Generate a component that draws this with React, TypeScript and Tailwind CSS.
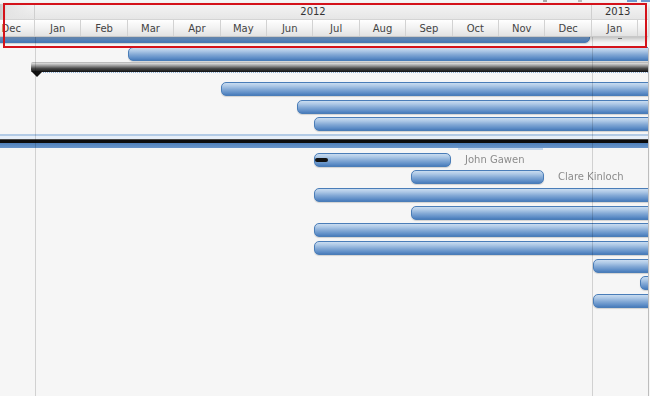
import type { CSSProperties } from "react";

type Row =
  | { kind: "bar"; left: number; right: number; label?: string; progress?: boolean }
  | { kind: "summary"; left: number }
  | { kind: "selected" };

const months = ["Dec", "Jan", "Feb", "Mar", "Apr", "May", "Jun", "Jul", "Aug", "Sep", "Oct", "Nov", "Dec", "Jan", "Feb"];

const rows: Row[] = [
  { kind: "bar", left: -10, right: 590 },
  { kind: "bar", left: 128, right: 700 },
  { kind: "summary", left: 31 },
  { kind: "bar", left: 221, right: 700 },
  { kind: "bar", left: 297, right: 700 },
  { kind: "bar", left: 314, right: 700 },
  { kind: "selected" },
  { kind: "bar", left: 314, right: 451, label: "John Gawen", progress: true },
  { kind: "bar", left: 411, right: 544, label: "Clare Kinloch" },
  { kind: "bar", left: 314, right: 700 },
  { kind: "bar", left: 411, right: 700 },
  { kind: "bar", left: 314, right: 700 },
  { kind: "bar", left: 314, right: 700 },
  { kind: "bar", left: 593, right: 700 },
  { kind: "bar", left: 640, right: 700 },
  { kind: "bar", left: 593, right: 700 },
];

function TaskBar({ row }: { row: Extract<Row, { kind: "bar" }> }) {
  const style: CSSProperties = { left: row.left, width: row.right - row.left };
  return (
    <>
      <div
        className="absolute top-[4px] h-[14px] rounded-[5px] border border-[#4a7db8] bg-[linear-gradient(to_bottom,#c9dcf0_0%,#adc8e6_25%,#82a8d5_55%,#5c8cc6_85%,#4a7cba_100%)] shadow-[0_1px_1px_rgba(0,0,0,0.15)]"
        style={style}
      >
        {row.progress && (
          <div className="absolute left-0 top-[4px] h-[4px] w-[13px] rounded-[2px] bg-[#111]" />
        )}
      </div>
      {row.label && (
        <span
          className="absolute top-[4px] text-[10px] leading-[14px] text-[#8c8c8c] blur-[0.7px]"
          style={{ left: row.right + 14 }}
        >
          {row.label}
        </span>
      )}
    </>
  );
}

function SummaryBar({ left }: { left: number }) {
  return (
    <>
      <div
        className="absolute top-[2px] right-0 h-[10px] rounded-l-[2px] border-t border-[#bbb] bg-[linear-gradient(to_bottom,#e0e0e0_0%,#9a9a9a_30%,#4a4a4a_60%,#111_100%)]"
        style={{ left }}
      />
      <svg className="absolute top-[11px]" style={{ left }} width="12" height="7" viewBox="0 0 12 7">
        <polygon points="0,0 12,0 6,6" fill="#111" />
      </svg>
      <div
        className="absolute top-[12px] right-0 border-t border-dotted border-[#8fb0d6]"
        style={{ left: left + 12 }}
      />
    </>
  );
}

function SelectedBand() {
  return (
    <div className="absolute left-0 right-0 top-[3px] flex flex-col">
      <div className="h-[2px] bg-[#b3cbe6]" />
      <div className="h-[3px] bg-[#e6eef8]" />
      <div className="h-[1px] bg-[#4a4a4a]" />
      <div className="h-[3px] bg-[#0c0c0c]" />
      <div className="h-[5px] bg-[linear-gradient(to_bottom,#4e7fb9,#6b97cb)]" />
    </div>
  );
}

export default function App() {
  return (
    <div className="relative h-[396px] w-[650px] overflow-hidden bg-[#f6f6f6] font-['DejaVu_Sans',sans-serif]">
      {/* body rows */}
      <div className="absolute left-0 top-0 h-full w-[648px] overflow-hidden">
        <div className="flex flex-col pt-[25px]">
          {rows.map((row, i) => (
            <div key={i} className="relative h-[17.67px] shrink-0">
              {row.kind === "bar" && <TaskBar row={row} />}
              {row.kind === "summary" && <SummaryBar left={row.left} />}
              {row.kind === "selected" && <SelectedBand />}
            </div>
          ))}
        </div>
        {/* light accent under selection */}
        <div className="absolute left-[458px] top-[148px] h-[2px] w-[85px] bg-[#c5d7ec]" />
        {/* grid lines */}
        <div className="absolute left-[35px] top-[37px] bottom-0 w-px bg-black/15" />
        <div className="absolute left-[592px] top-[37px] bottom-0 w-px bg-black/15" />
      </div>
      <div className="absolute right-[1px] top-[48px] bottom-0 w-px bg-[#bdbdbd]" />

      {/* toolbar peeking above */}
      <div className="absolute right-0 top-0 flex h-[2px] w-[107px] gap-[31px]">
        <div className="w-[4px] bg-[#aaa]" />
        <div className="flex w-[72px] gap-[45px]">
          <div className="w-[4px] bg-[#bbb]" />
          <div className="flex flex-1 gap-[4px]">
            <div className="flex-1 bg-[#6f9ad0]" />
            <div className="flex-1 bg-[#6f9ad0]" />
          </div>
        </div>
      </div>

      {/* timeline header */}
      <div className="absolute left-0 top-[4px] w-[648px] overflow-hidden shadow-[0_2px_5px_rgba(0,0,0,0.25)]">
        <div className="flex h-[16px] border-b border-[#d4d4d4] bg-[linear-gradient(to_bottom,#f4f4f4,#e6e6e6)] text-[10px] leading-[16px] text-[#333]">
          <div className="-ml-[11.42px] w-[46.42px] shrink-0 border-r border-[#cfcfcf] bg-[linear-gradient(to_right,transparent_20%,#c9c9c9_25%,#e4e4e4_40%,transparent_100%)]" />
          <div className="w-[557px] shrink-0 border-r border-[#cfcfcf] text-center">2012</div>
          <div className="flex-1 pl-[13px]">2013</div>
        </div>
        <div className="flex h-[17px] border-b border-[#c8c8c8] bg-[linear-gradient(to_bottom,#ffffff,#f2f2f2_50%,#e2e2e2)] text-[10px] leading-[17px] text-[#444]">
          {months.map((m, i) => (
            <div
              key={i}
              className={`w-[46.42px] shrink-0 border-r border-[#d2d2d2] text-center ${i === 0 ? "-ml-[11.42px]" : ""}`}
            >
              {m}
            </div>
          ))}
        </div>
      </div>
      <div className="absolute left-[618px] top-[38px] h-[1px] w-[4px] bg-[#666]" />

      {/* annotation box */}
      <div className="pointer-events-none absolute left-[3px] top-[3px] h-[45px] w-[644px] border-2 border-[#d4121a]" />
    </div>
  );
}
